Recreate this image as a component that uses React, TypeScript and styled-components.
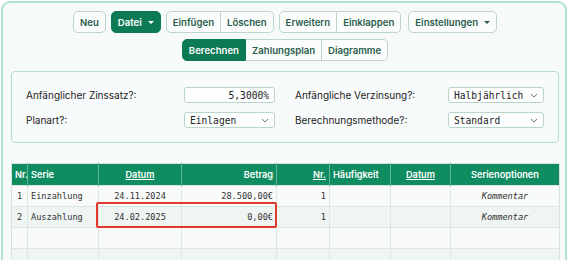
import React from "react";
import styled, { createGlobalStyle, css } from "styled-components";

const Global = createGlobalStyle`
  html, body { margin: 0; padding: 0; overflow: hidden; background: #ffffff; }
  body { font-family: Inter, "Noto Sans", sans-serif; }
  * { box-sizing: border-box; }
`;

const Frame = styled.div`
  margin: 1px 0 0 1px;
  width: 566px;
  height: 300px;
  border: 2px solid #b4e0cf;
  border-bottom: none;
  border-radius: 9px 9px 0 0;
  background: #f6fafb;
  padding: 8px 6px 0 8px;
  display: flex;
  flex-direction: column;
  overflow: hidden;
`;

const Toolbar = styled.div`
  display: flex;
  justify-content: center;
  gap: 5px;
  margin-bottom: 6px;
`;

const Group = styled.div`
  display: flex;
`;

const Button = styled.button<{ $primary?: boolean; $pos?: "first" | "mid" | "last" | "solo"; $extra?: number }>`
  height: 22px;
  padding: 0 6px;
  margin-left: ${(p) => p.$extra || 0}px;
  font-family: Inter, sans-serif;
  font-size: 9.6px;
  font-weight: 600;
  color: #2a5e4c;
  background: #fbfdfd;
  border: 1px solid #bcd6cd;
  border-radius: 5px;
  display: flex;
  align-items: center;
  gap: 6px;
  cursor: pointer;
  ${(p) =>
    p.$pos === "first" &&
    css`
      border-top-right-radius: 0;
      border-bottom-right-radius: 0;
    `}
  ${(p) =>
    p.$pos === "mid" &&
    css`
      border-radius: 0;
      border-left: none;
    `}
  ${(p) =>
    p.$pos === "last" &&
    css`
      border-top-left-radius: 0;
      border-bottom-left-radius: 0;
      border-left: none;
    `}
  ${(p) =>
    p.$primary &&
    css`
      background: #0d7a56;
      border-color: #0d7a56;
      color: #ffffff;
    `}
`;

const Caret = styled.span<{ $light?: boolean }>`
  width: 0;
  height: 0;
  border-left: 3px solid transparent;
  border-right: 3px solid transparent;
  border-top: 3px solid ${(p) => (p.$light ? "#ffffff" : "#2a5e4c")};
`;

const Panel = styled.div`
  margin-top: 4px;
  border: 1px solid #b4dccd;
  border-radius: 4px;
  background: #f8fbfc;
  padding: 15px 14px 14px 14px;
  display: grid;
  grid-template-columns: 1fr 1fr;
  column-gap: 20px;
  row-gap: 9px;
`;

const Field = styled.div`
  display: flex;
  align-items: center;
  justify-content: space-between;
  height: 16px;
`;

const Label = styled.span`
  font-size: 10px;
  color: #222;
  font-family: Inter, sans-serif;
`;

const Control = styled.div<{ $w: number; $align?: string }>`
  width: ${(p) => p.$w}px;
  height: 16px;
  border: 1px solid #b8d4cb;
  border-radius: 3px;
  background: #fdfefe;
  font-family: "DejaVu Sans Mono", "Liberation Mono", monospace;
  font-size: 9.6px;
  color: #222;
  display: flex;
  align-items: center;
  justify-content: ${(p) => p.$align || "space-between"};
  padding: 0 5px;
  white-space: nowrap;
`;

const Chevron = () => (
  <svg width="8" height="5" viewBox="0 0 8 5">
    <path d="M1 1l3 3 3-3" fill="none" stroke="#777" strokeWidth="1" />
  </svg>
);

const TableWrap = styled.div`
  position: relative;
  margin-top: 20px;
`;

const Table = styled.table`
  width: 548px;
  border-collapse: collapse;
  table-layout: fixed;
  border: 1px solid #d6e2de;
`;

const Th = styled.th<{ $align?: string; $link?: boolean }>`
  background: #0f8c60;
  color: #ffffff;
  font-family: Inter, sans-serif;
  font-size: 9.2px;
  font-weight: 600;
  height: 22px;
  padding: 0 3px;
  text-align: ${(p) => p.$align || "left"};
  border-left: 1px solid #5fb797;
  text-decoration: ${(p) => (p.$link ? "underline" : "none")};
  &:first-child { border-left: none; }
`;

const Row = styled.tr<{ $alt?: boolean }>`
  background: ${(p) => (p.$alt ? "#eef5f3" : "#f9fbfb")};
`;

const Td = styled.td<{ $align?: string; $italic?: boolean }>`
  height: 21px;
  padding: 0 3px;
  font-family: "DejaVu Sans Mono", "Liberation Mono", monospace;
  font-size: 8.6px;
  color: #333;
  text-align: ${(p) => p.$align || "left"};
  font-style: ${(p) => (p.$italic ? "italic" : "normal")};
  border-left: 1px solid #dde6e3;
  border-top: 1px solid #dde6e3;
  white-space: nowrap;
  &:first-child { border-left: none; }
`;

const Highlight = styled.div`
  position: absolute;
  left: 85px;
  top: 39px;
  width: 181px;
  height: 26px;
  border: 2px solid #e0392b;
  border-radius: 2px;
  pointer-events: none;
`;

const cols = [16, 71, 83, 95, 53, 61, 60, 109];

const rows = [
  { nr: "1", serie: "Einzahlung", datum: "24.11.2024", betrag: "28.500,00€", n: "1" },
  { nr: "2", serie: "Auszahlung", datum: "24.02.2025", betrag: "0,00€", n: "1" },
];

export default function App() {
  return (
    <>
      <Global />
      <Frame>
        <Toolbar>
          <Button $pos="solo">Neu</Button>
          <Button $primary>
            Datei <Caret $light />
          </Button>
          <Group>
            <Button $pos="first">Einfügen</Button>
            <Button $pos="last">Löschen</Button>
          </Group>
          <Group>
            <Button $pos="first">Erweitern</Button>
            <Button $pos="last">Einklappen</Button>
          </Group>
          <Button $extra={2}>
            Einstellungen <Caret />
          </Button>
        </Toolbar>
        <Toolbar>
          <Group>
            <Button $pos="first" $primary>Berechnen</Button>
            <Button $pos="mid">Zahlungsplan</Button>
            <Button $pos="last">Diagramme</Button>
          </Group>
        </Toolbar>
        <Panel>
          <Field>
            <Label>Anfänglicher Zinssatz?:</Label>
            <Control $w={91} $align="flex-end">5,3000%</Control>
          </Field>
          <Field>
            <Label>Anfängliche Verzinsung?:</Label>
            <Control $w={96}>
              Halbjährlich <Chevron />
            </Control>
          </Field>
          <Field>
            <Label>Planart?:</Label>
            <Control $w={91}>
              Einlagen <Chevron />
            </Control>
          </Field>
          <Field>
            <Label>Berechnungsmethode?:</Label>
            <Control $w={96}>
              Standard <Chevron />
            </Control>
          </Field>
        </Panel>
        <TableWrap>
          <Table>
            <colgroup>
              {cols.map((w, i) => (
                <col key={i} style={{ width: w }} />
              ))}
            </colgroup>
            <thead>
              <tr>
                <Th>Nr.</Th>
                <Th>Serie</Th>
                <Th $align="center" $link>Datum</Th>
                <Th $align="right">Betrag</Th>
                <Th $align="right" $link>Nr.</Th>
                <Th>Häufigkeit</Th>
                <Th $align="center" $link>Datum</Th>
                <Th $align="center">Serienoptionen</Th>
              </tr>
            </thead>
            <tbody>
              {rows.map((r, i) => (
                <Row key={i} $alt={i % 2 === 1}>
                  <Td $align="center">{r.nr}</Td>
                  <Td>{r.serie}</Td>
                  <Td $align="center">{r.datum}</Td>
                  <Td $align="right">{r.betrag}</Td>
                  <Td $align="right">{r.n}</Td>
                  <Td />
                  <Td />
                  <Td $align="center" $italic>Kommentar</Td>
                </Row>
              ))}
              {[0, 1, 2].map((i) => (
                <Row key={"e" + i} $alt={i % 2 === 1}>
                  {cols.map((_, j) => (
                    <Td key={j} />
                  ))}
                </Row>
              ))}
            </tbody>
          </Table>
          <Highlight />
        </TableWrap>
      </Frame>
    </>
  );
}
